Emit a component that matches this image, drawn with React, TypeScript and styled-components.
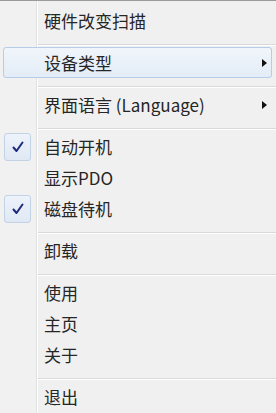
import React from "react";
import styled, { createGlobalStyle } from "styled-components";

type Entry =
  | { kind: "sep" }
  | { kind: "item"; label: string; checked?: boolean; submenu?: boolean; hot?: boolean };

const entries: Entry[] = [
  { kind: "item", label: "硬件改变扫描" },
  { kind: "sep" },
  { kind: "item", label: "设备类型", submenu: true, hot: true },
  { kind: "sep" },
  { kind: "item", label: "界面语言 (Language)", submenu: true },
  { kind: "sep" },
  { kind: "item", label: "自动开机", checked: true },
  { kind: "item", label: "显示PDO" },
  { kind: "item", label: "磁盘待机", checked: true },
  { kind: "sep" },
  { kind: "item", label: "卸载" },
  { kind: "sep" },
  { kind: "item", label: "使用" },
  { kind: "item", label: "主页" },
  { kind: "item", label: "关于" },
  { kind: "sep" },
  { kind: "item", label: "退出" },
];

export default function App() {
  return (
    <>
      <GlobalStyle />
      <Menu>
        {entries.map((e, i) =>
          e.kind === "sep" ? (
            <Separator key={i} />
          ) : (
            <Item key={i} $hot={e.hot}>
              {e.checked && (
                <CheckBox>
                  <svg width="12" height="12" viewBox="0 0 12 12">
                    <path
                      d="M1.5 6.5 L4.5 10 L10.5 1.5"
                      fill="none"
                      stroke="#1c2b7a"
                      strokeWidth="2"
                      strokeLinecap="round"
                      strokeLinejoin="round"
                    />
                  </svg>
                </CheckBox>
              )}
              <Label>{e.label}</Label>
              {e.submenu && <Arrow />}
            </Item>
          )
        )}
      </Menu>
    </>
  );
}

// styles
const GlobalStyle = createGlobalStyle`
  html, body {
    margin: 0;
    padding: 0;
    background: #f0f0f0;
  }
`;

const Menu = styled.div`
  width: 276px;
  height: 413px;
  box-sizing: border-box;
  padding-top: 4px;
  border-top: 1px solid #9a9a9a;
  background: linear-gradient(
    to right,
    #f1f1f1 0 36px,
    #e0e1e1 36px 37px,
    #ffffff 37px 38px,
    #f0f0f0 38px
  );
  font-family: "Noto Sans CJK SC", "Noto Sans", sans-serif;
  font-size: 17px;
  color: #262626;
`;

const Item = styled.div<{ $hot?: boolean }>`
  position: relative;
  display: flex;
  align-items: center;
  box-sizing: border-box;
  height: 31px;
  margin: 0 4px 0 3px;
  padding: 0 4px 0 40px;
  border: 1px solid ${(p) => (p.$hot ? "#b4cde8" : "transparent")};
  border-radius: 3px;
  background: ${(p) =>
    p.$hot ? "linear-gradient(#f0f5fb, #e3ecf7)" : "transparent"};
`;

const Label = styled.span`
  flex: 1;
  line-height: 1;
  white-space: nowrap;
`;

const CheckBox = styled.span`
  position: absolute;
  left: 0;
  top: 1px;
  width: 27px;
  height: 28px;
  box-sizing: border-box;
  display: flex;
  align-items: center;
  justify-content: center;
  border: 1px solid #c3d3e6;
  border-radius: 3px;
  background: linear-gradient(#eef3fa, #dfe8f4);
`;

const Arrow = styled.span`
  width: 0;
  height: 0;
  border-left: 5px solid #111;
  border-top: 4px solid transparent;
  border-bottom: 4px solid transparent;
`;

const Separator = styled.div`
  height: 8px;
  margin: 0 0 2px 38px;
  border-bottom: 1px solid #d9d9d9;
  box-shadow: 0 1px 0 #ffffff;
`;
